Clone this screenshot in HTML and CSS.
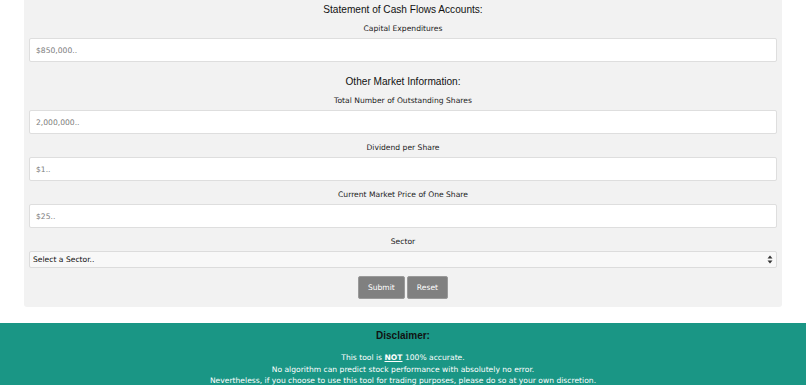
FILE: index.html
```html
<!DOCTYPE html>
<html lang="en">
<head>
    <meta charset="UTF-8">
    <meta name="viewport" content="width=device-width, initial-scale=1.0">
    <title>Stock Valuation Tool</title>
    <link rel="stylesheet" href="styles.css">
</head>
<body>
    <div class="panel">
        <form id="valuationForm">
            <!-- cash flow -->
            <h3>Statement of Cash Flows Accounts:</h3>
            <div class="form-group">
                <label for="capex">Capital Expenditures</label>
                <input type="text" id="capex" placeholder="$850,000..">
            </div>

            <!-- market info -->
            <h3>Other Market Information:</h3>
            <div class="form-group">
                <label for="shares">Total Number of Outstanding Shares</label>
                <input type="text" id="shares" placeholder="2,000,000..">
            </div>
            <div class="form-group">
                <label for="dividend">Dividend per Share</label>
                <input type="text" id="dividend" placeholder="$1..">
            </div>
            <div class="form-group">
                <label for="price">Current Market Price of One Share</label>
                <input type="text" id="price" placeholder="$25..">
            </div>
            <div class="form-group">
                <label for="sector">Sector</label>
                <div class="select-wrap">
                    <select id="sector">
                        <option>Select a Sector..</option>
                        <option>Technology</option>
                        <option>Healthcare</option>
                        <option>Financials</option>
                        <option>Energy</option>
                    </select>
                    <svg class="select-arrows" width="6" height="9" viewBox="0 0 6 9">
                        <path d="M3 0.5 L5.5 3.5 L0.5 3.5 Z" fill="#333"/>
                        <path d="M3 8.5 L5.5 5.5 L0.5 5.5 Z" fill="#333"/>
                    </svg>
                </div>
            </div>

            <div class="button-group">
                <button type="submit">Submit</button>
                <button type="reset">Reset</button>
            </div>
        </form>
    </div>

    <footer class="disclaimer">
        <h4>Disclaimer:</h4>
        <p>This tool is <strong>NOT</strong> 100% accurate.</p>
        <p>No algorithm can predict stock performance with absolutely no error.</p>
        <p>Nevertheless, if you choose to use this tool for trading purposes, please do so at your own discretion.</p>
    </footer>
</body>
</html>
```

FILE: styles.css
```css
* {
    margin: 0;
    padding: 0;
    box-sizing: border-box;
}

body {
    font-family: "DejaVu Sans", Verdana, sans-serif;
    font-size: 7.6px;
    background-color: #fff;
    color: #222;
}

.panel {
    margin: 0 24px;
    padding: 0 5px 8px;
    background: #f2f2f2;
    border-radius: 0 0 3px 3px;
}

h3 {
    font-family: "Liberation Sans", Arial, sans-serif;
    font-size: 10.1px;
    font-weight: normal;
    color: #111;
    text-align: center;
    line-height: 20px;
    margin: 10px 0 2px;
}

h3:first-child {
    margin-top: 0;
}

.form-group + .form-group {
    margin-top: 7px;
}

label {
    display: block;
    text-align: center;
    line-height: 13px;
    margin-bottom: 3px;
    color: #222;
}

input {
    display: block;
    width: 100%;
    height: 24px;
    padding: 0 6px;
    font-family: inherit;
    font-size: 7.6px;
    border: 1px solid #dedede;
    border-radius: 2px;
    background: #fff;
}

input::placeholder {
    color: #7d7d7d;
}

.select-wrap {
    position: relative;
}

select {
    display: block;
    width: 100%;
    height: 17px;
    padding: 0 3px;
    font-family: inherit;
    font-size: 7.6px;
    color: #111;
    border: 1px solid #dcdcdc;
    border-radius: 2px;
    background: #f8f8f8;
    appearance: none;
    -webkit-appearance: none;
}

.select-arrows {
    position: absolute;
    right: 4px;
    top: 4px;
    pointer-events: none;
}

.button-group {
    display: flex;
    justify-content: center;
    gap: 2px;
    margin-top: 8px;
}

button {
    height: 23px;
    padding: 0 9px;
    font-family: inherit;
    font-size: 7.6px;
    color: #fff;
    background: #808080;
    border: 1px solid #9a9a9a;
    border-radius: 2px;
    cursor: pointer;
}

button:hover {
    background: #6e6e6e;
}

.disclaimer {
    margin-top: 16px;
    padding: 6px 0 12px;
    background: #1a9685;
    color: #fff;
    text-align: center;
}

.disclaimer h4 {
    font-family: "Liberation Sans", Arial, sans-serif;
    font-size: 10px;
    line-height: 14px;
    color: #111;
    margin-bottom: 9px;
}

.disclaimer p {
    line-height: 11.5px;
}

.disclaimer strong {
    text-decoration: underline;
}
```
